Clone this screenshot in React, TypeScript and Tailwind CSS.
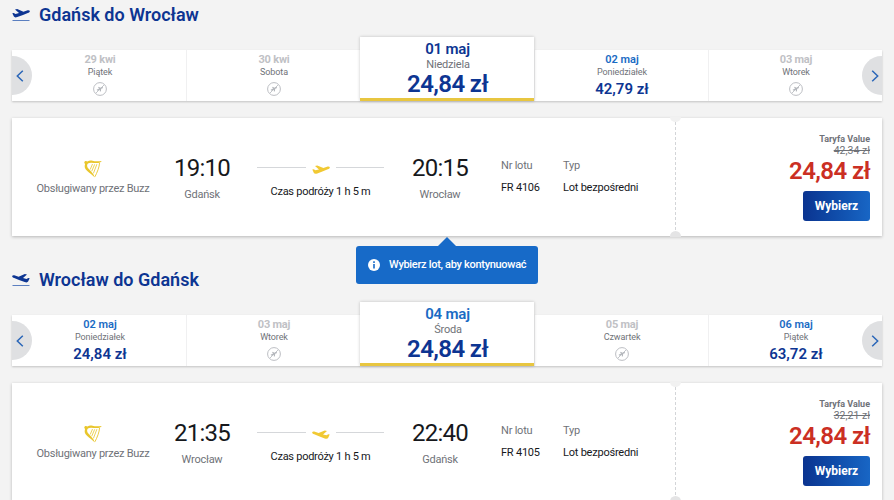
import React from "react";

type Day = { date: string; day: string; price?: string; active?: boolean };
type Flight = {
  title: string;
  from: string;
  to: string;
  dep: string;
  arr: string;
  nr: string;
  old: string;
  back?: boolean;
  days: Day[];
};

const flights: Flight[] = [
  {
    title: "Gdańsk do Wrocław",
    from: "Gdańsk",
    to: "Wrocław",
    dep: "19:10",
    arr: "20:15",
    nr: "FR 4106",
    old: "42,34 zł",
    days: [
      { date: "29 kwi", day: "Piątek" },
      { date: "30 kwi", day: "Sobota" },
      { date: "01 maj", day: "Niedziela", price: "24,84 zł", active: true },
      { date: "02 maj", day: "Poniedziałek", price: "42,79 zł" },
      { date: "03 maj", day: "Wtorek" },
    ],
  },
  {
    title: "Wrocław do Gdańsk",
    from: "Wrocław",
    to: "Gdańsk",
    dep: "21:35",
    arr: "22:40",
    nr: "FR 4105",
    old: "32,21 zł",
    back: true,
    days: [
      { date: "02 maj", day: "Poniedziałek", price: "24,84 zł" },
      { date: "03 maj", day: "Wtorek" },
      { date: "04 maj", day: "Środa", price: "24,84 zł", active: true },
      { date: "05 maj", day: "Czwartek" },
      { date: "06 maj", day: "Piątek", price: "63,72 zł" },
    ],
  },
];

// Side view of a climbing plane, in an 18 by 10 box
const PLANE =
  "M.3 4.600 1.700 4.200 3.500 5.300 7 4.400 3 .9 5.200.4 11.400 3 15 1.700C16.500 1.200 17.600 1.500 17.800 2.200 18 3.100 17 3.800 15.800 4.300L11 6.300 5.300 8.400C3.600 8.900 2.400 8.800 1.900 7.900Z";

function TitleIcon({ back }: { back?: boolean }) {
  return (
    <svg viewBox="0 0 18 16" className="h-4 w-[18px]">
      <g transform={back ? "translate(18 1.7) scale(-1 1)" : "translate(0 1.7)"}>
        <path d={PLANE} fill="#0d3592" />
      </g>
      <rect x="0.5" y="13" width="17" height="1" fill="#5b7fc0" />
    </svg>
  );
}

function RoutePlane({ back }: { back?: boolean }) {
  return (
    <svg viewBox="0 0 18 10" className="h-[10px] w-[18px]">
      <g transform={back ? "translate(18 0) scale(-1 1)" : undefined}>
        <path d={PLANE} fill="#f1c933" />
      </g>
    </svg>
  );
}

function NoFlight() {
  return (
    <svg viewBox="0 0 14 14" className="mt-[4px] h-[14px] w-[14px] shrink-0" fill="none" stroke="#b4b7bc">
      <circle cx="7" cy="7" r="6.4" strokeWidth="0.9" />
      <path d="M3 11 11 3" strokeWidth="0.8" />
      <path d="M3.900 8.300 9.800 5.400M5.400 5.200 7.600 6.500 7.300 9.400" strokeWidth="1.200" />
    </svg>
  );
}

function Harp() {
  return (
    <svg viewBox="0 0 18 18" className="h-[18px] w-[18px] shrink-0" fill="none" stroke="#e9c62c">
      <path
        d="M.2 2.200C1 .5 2.500.9 3.500 1.500 5 .5 6.500.2 8.500.8 11 1.500 14 1.400 17.800 1 16.500 2.400 15 3 13 3 10 3.100 6 1.900 3.900 3.400 2.500 4.700 3 7 4.600 8.800 7 11.500 9.600 13.500 10.800 17.600 8.500 15 5.500 13 3 10.800.8 8.800.2 6.500 1 4.200Z"
        fill="#e9c62c"
        stroke="none"
      />
      <path d="M15.600 2.600C15.400 7 13.200 12.500 10.900 16.800" strokeWidth="0.900" />
      <path d="M8.500 4 6.200 9.500M10.700 4.300 7.700 11.300M12.900 4.200 9.400 13.400" strokeWidth="0.800" />
    </svg>
  );
}

function Arrow({ right }: { right?: boolean }) {
  return (
    <button
      className={
        right
          ? "absolute right-0 top-[19px] z-20 flex h-[39px] w-5 items-center justify-center rounded-l-full bg-[#dfe0e2] pl-[5px]"
          : "absolute left-0 top-[19px] z-20 flex h-[39px] w-5 items-center justify-center rounded-r-full bg-[#dfe0e2] pr-[4px]"
      }
    >
      <svg viewBox="0 0 8 12" className="h-3 w-2 shrink-0" fill="none" stroke="#2a66b8" strokeWidth="1.5">
        <path d={right ? "M1.200.7 6.700 6 1.200 11.300" : "M6.800.7 1.300 6 6.800 11.300"} />
      </svg>
    </button>
  );
}

function DayCell({ d, first }: { d: Day; first: boolean }) {
  if (d.active) {
    return (
      <div className="relative z-10 flex h-16 w-[174px] flex-col items-center bg-white pt-[3px] text-center shadow-[0_0_3px_rgba(0,0,0,0.22)]">
        <div className={first ? "h-[18px] pl-px text-[15px] font-semibold leading-[18px] tracking-[-0.2px] text-[#0d3592]" : "h-[18px] pl-px text-[15px] font-semibold leading-[18px] tracking-[-0.2px] text-[#1a6bc4]"}>{d.date}</div>
        <div className="h-[13px] pl-[2px] text-[11px] leading-[13px] tracking-[-0.2px] text-[#6f7278]">{d.day}</div>
        <div className="pl-px text-[24px] font-semibold leading-[26px] tracking-[-0.6px] text-[#0d3592]">{d.price}</div>
        <div className="mt-auto h-[3px] w-full bg-[#e8c640]" />
      </div>
    );
  }
  return (
    <div className="flex h-[51px] w-[174px] flex-col items-center border-l border-[#f0f0f1] bg-white pl-px pt-[3px] first:border-l-0 first:pl-[2px]">
      <div className={d.price ? "text-[11px] font-semibold leading-[13px] text-[#1a6bc4]" : "text-[11px] font-bold leading-[13px] tracking-[-0.2px] text-[#bfc1c5]"}>{d.date}</div>
      <div className="text-[9px] leading-[12px] tracking-[-0.1px] text-[#6f7278]">{d.day}</div>
      {d.price ? (
        <div className="mt-[2px] text-[15px] font-semibold leading-[18px] text-[#0d3592]">{d.price}</div>
      ) : (
        <NoFlight />
      )}
    </div>
  );
}

function Section({ f }: { f: Flight }) {
  return (
    <section className="h-[265px] px-3">
      <h2 className="flex h-[30px] items-center text-[18px] font-semibold text-[#0d3592]">
        <TitleIcon back={f.back} />
        <span className="mb-[2px] ml-[9px]">{f.title}</span>
      </h2>
      <div className="relative mt-[7px] flex h-16 w-[870px] items-end">
        <div className="flex h-[51px] items-end shadow-[0_1px_2px_rgba(0,0,0,0.2)]">
          {f.days.map((d) => (
            <DayCell key={d.date} d={d} first={!f.back} />
          ))}
        </div>
        <Arrow />
        <Arrow right />
      </div>
      <div className="mt-[17px] flex h-[118px] w-[870px] bg-white shadow-[0_1px_3px_rgba(0,0,0,0.25)]">
        <div className="flex w-[162px] flex-col items-center pt-[42px]">
          <Harp />
          <div className="mt-[4px] whitespace-nowrap text-[11px] leading-[14px] tracking-[-0.26px] text-[#6f7278]">Obsługiwany przez Buzz</div>
        </div>
        <div className="flex w-14 flex-col items-center pt-[37px]">
          <div className="text-[24px] leading-[26px] tracking-[-0.8px] text-[#16181c]">{f.dep}</div>
          <div className="mt-[7px] text-[11px] leading-[14px] tracking-[-0.25px] text-[#6f7278]">{f.from}</div>
        </div>
        <div className="ml-[27px] flex w-[127px] flex-col items-center pt-[44px]">
          <div className="flex h-[15px] w-full items-center justify-between">
            <div className="mb-[5px] h-px w-[49px] bg-[#d5d7da]" />
            <RoutePlane back={f.back} />
            <div className="mb-[5px] h-px w-[48px] bg-[#d5d7da]" />
          </div>
          <div className="mt-[8px] text-[11px] leading-[14px] tracking-[-0.26px] text-[#16181c]">Czas podróży 1 h 5 m</div>
        </div>
        <div className="ml-7 flex w-14 flex-col items-center pt-[37px]">
          <div className="text-[24px] leading-[26px] tracking-[-0.8px] text-[#16181c]">{f.arr}</div>
          <div className="mt-[7px] text-[11px] leading-[14px] tracking-[-0.25px] text-[#6f7278]">{f.to}</div>
        </div>
        <div className="ml-[33px] w-[62px] pt-[41px] text-[11px] leading-[14px] tracking-[-0.22px]">
          <div className="text-[#6f7278]">Nr lotu</div>
          <div className="mt-2 text-[#16181c]">{f.nr}</div>
        </div>
        <div className="w-[112px] pt-[41px] text-[11px] leading-[14px] tracking-[-0.22px]">
          <div className="text-[#6f7278]">Typ</div>
          <div className="mt-2 text-[#16181c]">Lot bezpośredni</div>
        </div>
        <div className="relative w-px">
          <svg className="h-full w-px" viewBox="0 0 1 118">
            <path d="M.5 4V114" stroke="#d3d5d8" strokeDasharray="3 2" />
          </svg>
          <div className="absolute -left-[5px] -top-px h-[5px] w-[11px] rounded-b-full bg-[#f1f1f1]" />
          <div className="absolute -bottom-px -left-[5px] h-[6px] w-[11px] rounded-t-full bg-[#e4e4e5]" />
        </div>
        <div className="flex flex-1 flex-col items-end pr-3 pt-[15px]">
          <div className="text-[9px] font-bold leading-[12px] text-[#6f7278]">Taryfa Value</div>
          <div className="text-[10.5px] leading-[11px] text-[#6f7278] line-through">{f.old}</div>
          <div className="mt-[2px] text-[24px] font-semibold leading-[26px] tracking-[-0.6px] text-[#cb2f23]">24,84 zł</div>
          <button className="mt-[7px] h-[30px] w-[67px] rounded-[3px] bg-gradient-to-r from-[#0b3490] to-[#1866c5] text-[12px] font-bold text-white">Wybierz</button>
        </div>
      </div>
    </section>
  );
}

export default function App() {
  return (
    <main className="relative h-[500px] w-[894px] overflow-hidden bg-[#f3f3f3] font-['Roboto',sans-serif]">
      {flights.map((f) => (
        <Section key={f.title} f={f} />
      ))}
      <div className="absolute left-[356px] top-[246px] z-30 flex h-[38px] w-[182px] items-center rounded-[3px] bg-[#176ac8] pl-3 text-[11px] font-medium tracking-[-0.3px] text-white">
        <svg viewBox="0 0 18 9" className="absolute -top-[9px] left-[82px] h-[9px] w-[18px]">
          <path d="M0 9 9 0l9 9z" fill="#176ac8" />
        </svg>
        <svg viewBox="0 0 12 12" className="h-3 w-3 shrink-0">
          <circle cx="6" cy="6" r="6" fill="#fff" />
          <path d="M6 2.300V4M6 5v4.500" stroke="#176ac8" strokeWidth="1.600" />
        </svg>
        <span className="ml-[9px] whitespace-nowrap">Wybierz lot, aby kontynuować</span>
      </div>
    </main>
  );
}
